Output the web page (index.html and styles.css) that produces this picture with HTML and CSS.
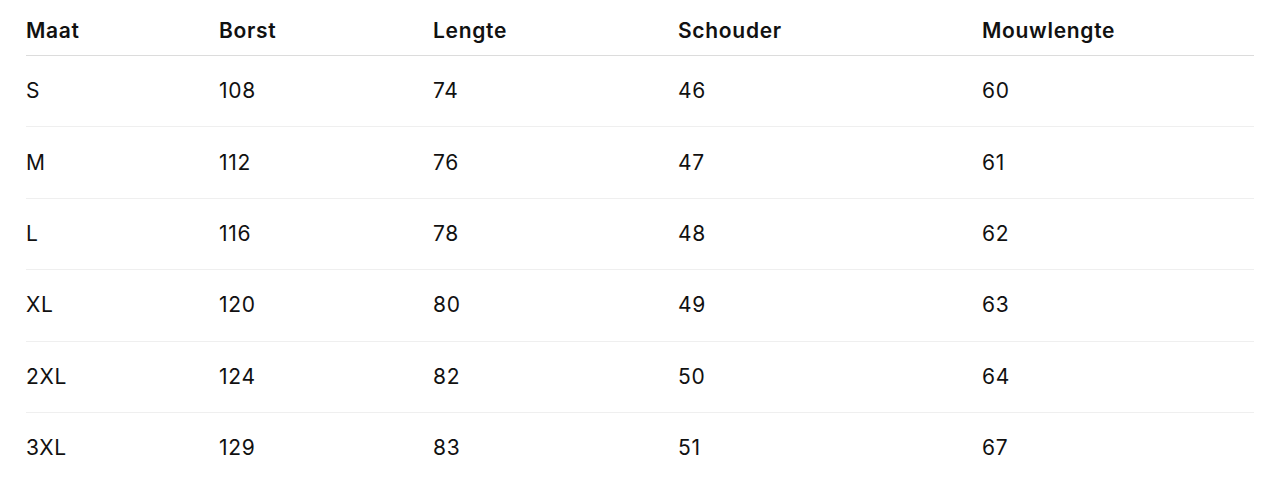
FILE: index.html
```html
<!DOCTYPE html>
<html lang="nl">
<head>
<meta charset="utf-8">
<title>Maattabel</title>
<link rel="stylesheet" href="styles.css">
</head>
<body>
<table class="size-table">
  <colgroup>
    <col class="c1"><col class="c2"><col class="c3"><col class="c4"><col class="c5">
  </colgroup>
  <thead>
    <tr><th>Maat</th><th>Borst</th><th>Lengte</th><th>Schouder</th><th>Mouwlengte</th></tr>
  </thead>
  <tbody>
    <tr><td>S</td><td>108</td><td>74</td><td>46</td><td>60</td></tr>
    <tr><td>M</td><td>112</td><td>76</td><td>47</td><td>61</td></tr>
    <tr><td>L</td><td>116</td><td>78</td><td>48</td><td>62</td></tr>
    <tr><td>XL</td><td>120</td><td>80</td><td>49</td><td>63</td></tr>
    <tr><td>2XL</td><td>124</td><td>82</td><td>50</td><td>64</td></tr>
    <tr><td>3XL</td><td>129</td><td>83</td><td>51</td><td>67</td></tr>
  </tbody>
</table>
</body>
</html>
```
FILE: styles.css
```css
html, body {
  margin: 0;
  padding: 0;
  background: #ffffff;
}
body {
  font-family: Inter, "Liberation Sans", Arial, sans-serif;
  color: #111111;
}
.size-table {
  margin: 0 0 0 26px;
  width: 1228px;
  border-collapse: separate;
  border-spacing: 0;
  table-layout: fixed;
  font-size: 21px;
  letter-spacing: 0.7px;
}
.c1 { width: 193px; }
.c2 { width: 214px; }
.c3 { width: 245px; }
.c4 { width: 304px; }
.c5 { width: 272px; }
.size-table th {
  text-align: left;
  font-weight: 600;
  line-height: 24px;
  padding: 18.5px 0 12.5px 0;
  border-bottom: 1px solid #dcdcdc;
}
.size-table td {
  text-align: left;
  font-weight: 400;
  line-height: 24px;
  padding: 23.2px 0;
  border-bottom: 1px solid #efefef;
}
.size-table tbody tr:last-child td {
  border-bottom: none;
}
```
